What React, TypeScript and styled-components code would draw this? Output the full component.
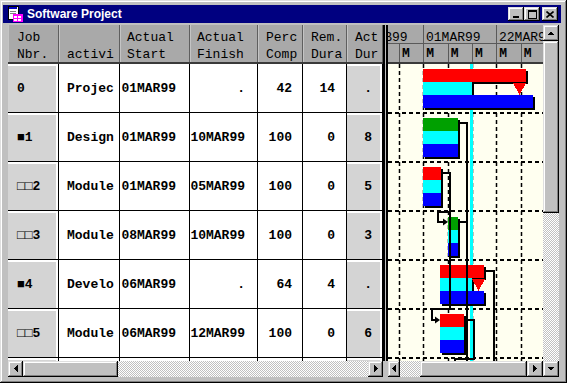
import React from 'react';
import styled, { createGlobalStyle, css } from 'styled-components';

const GlobalStyle = createGlobalStyle`
  html, body { margin: 0; padding: 0; }
  body { background: #c0c0c0; overflow: hidden; }
`;

const raised = css`
  background: #c0c0c0;
  box-shadow: inset -1px -1px #000, inset 1px 1px #dfdfdf, inset -2px -2px #808080, inset 2px 2px #fff;
`;

const Window = styled.div`
  box-sizing: border-box;
  width: 567px;
  height: 383px;
  padding: 5px 6px 0 3px;
  ${raised}
  font-family: "Liberation Mono", "DejaVu Sans Mono", monospace;
  color: #000;
`;

const TitleBar = styled.div`
  display: flex;
  align-items: center;
  height: 18px;
  padding: 0 3px 0 4px;
  background: #000080;
  color: #fff;
  font: bold 12px "Liberation Sans", Arial, sans-serif;
`;

const TitleText = styled.span`
  flex: 1;
  margin-left: 4px;
`;

const CaptionButton = styled.div<{ $gap?: boolean }>`
  ${raised}
  width: 16px;
  height: 14px;
  margin-left: ${p => (p.$gap ? '2px' : '0')};
  display: flex;
  align-items: center;
  justify-content: center;
`;

const Body = styled.div`
  display: grid;
  grid-template-columns: 375px 5px 155px 16px;
  grid-template-rows: 336px 16px;
  margin: 2px 0 0 5px;
`;

const TablePane = styled.div`
  grid-column: 1;
  grid-row: 1;
  display: flex;
  flex-direction: column;
  overflow: hidden;
  background: #fff;
`;

const cols = '51px 61px 70px 68px 45px 44px 36px';

const HeaderRow = styled.div`
  display: grid;
  grid-template-columns: ${cols};
  height: 39px;
  box-sizing: border-box;
  border-bottom: 2px solid #3a3a3a;
  background: #a9a9a9;
`;

const HeadCell = styled.div<{ $pad: number }>`
  box-sizing: border-box;
  padding: 4px 0 0 ${p => p.$pad}px;
  border-right: 1px solid #5f5f5f;
  box-shadow: inset 1px 0 #c4c4c4;
  font-size: 13px;
  line-height: 17px;
  white-space: pre;
  overflow: hidden;
`;

const Rows = styled.div`
  height: 297px;
  overflow: hidden;
`;

const Row = styled.div`
  display: grid;
  grid-template-columns: ${cols};
  height: 49px;
  box-sizing: border-box;
  border-bottom: 1px solid #000;
`;

const Cell = styled.div<{ $right?: boolean; $pad: number; $key?: boolean }>`
  box-sizing: border-box;
  display: flex;
  align-items: center;
  justify-content: ${p => (p.$right ? 'flex-end' : 'flex-start')};
  padding: ${p => (p.$right ? `0 ${p.$pad}px 0 0` : `0 0 0 ${p.$pad}px`)};
  border-right: 1px solid #000;
  background: ${p => (p.$key ? '#d4d4d4' : '#fff')};
  box-shadow: ${p => (p.$key ? 'inset 0 2px #fff, inset -2px 0 #fff' : 'none')};
  font-size: 13px;
  font-weight: bold;
  white-space: pre;
  overflow: hidden;
`;

const Splitter = styled.div`
  grid-column: 2;
  grid-row: 1;
  box-sizing: border-box;
  border-left: 2px solid #000;
  border-right: 2px solid #000;
  background: #c0c0c0;
`;

const GanttPane = styled.div`
  grid-column: 3;
  grid-row: 1;
  display: flex;
  flex-direction: column;
  overflow: hidden;
`;

const GanttHead = styled.div`
  flex: 0 0 39px;
  box-sizing: border-box;
  border-bottom: 2px solid #3a3a3a;
  background: #a9a9a9;
`;

const ScaleRow = styled.div<{ $h: number; $line?: boolean }>`
  display: flex;
  height: ${p => p.$h}px;
  box-sizing: border-box;
  border-bottom: ${p => (p.$line ? '1px solid #5a5a5a' : 'none')};
  overflow: hidden;
`;

const ScaleCell = styled.div<{ $w: number; $top: number; $bold?: boolean }>`
  flex: 0 0 ${p => p.$w}px;
  box-sizing: border-box;
  border-left: 1px solid #5a5a5a;
  padding: ${p => p.$top}px 0 0 2px;
  font-size: 13px;
  line-height: 13px;
  font-weight: ${p => (p.$bold ? 'bold' : 'normal')};
  white-space: nowrap;
  overflow: hidden;
`;

const ScrollBar = styled.div<{ $vertical?: boolean; $col: number }>`
  grid-column: ${p => p.$col};
  grid-row: ${p => (p.$vertical ? '1 / 3' : '2')};
  display: flex;
  flex-direction: ${p => (p.$vertical ? 'column' : 'row')};
  background: #c0c0c0;
  min-width: 0;
  min-height: 0;
`;

const ScrollButton = styled.div<{ $size: number }>`
  ${raised}
  flex: 0 0 ${p => p.$size}px;
  display: flex;
  align-items: center;
  justify-content: center;
`;

const Thumb = styled.div<{ $size: number }>`
  ${raised}
  flex: 0 0 ${p => p.$size}px;
`;

const Track = styled.div<{ $size?: number }>`
  flex: ${p => (p.$size ? `0 0 ${p.$size}px` : '1')};
  background: repeating-conic-gradient(#c0c0c0 0 25%, #fff 0 50%) 0 0 / 2px 2px;
`;

const Corner = styled.div`
  grid-column: 2;
  grid-row: 2;
  background: #c0c0c0;
`;

type Dir = 'up' | 'down' | 'left' | 'right';

const arrowPoints: Record<Dir, string> = {
  up: '0,6 3.5,2.5 7,6',
  down: '0,2 7,2 3.5,5.5',
  left: '5.5,0 5.5,7 2,3.5',
  right: '2,0 2,7 5.5,3.5',
};

const Arrow: React.FC<{ dir: Dir }> = ({ dir }) => (
  <svg width="8" height="8" viewBox="0 0 8 8" shapeRendering="crispEdges">
    <polygon points={arrowPoints[dir]} fill="#000" />
  </svg>
);

const AppIcon = () => (
  <svg width="16" height="16" viewBox="0 0 16 16" shapeRendering="crispEdges">
    <rect x="1" y="0" width="10" height="13" fill="#fff" stroke="#000" strokeWidth="1" />
    <rect x="2" y="1" width="8" height="2" fill="#0000c0" />
    <rect x="3" y="5" width="6" height="1" fill="#808080" />
    <rect x="3" y="7" width="6" height="1" fill="#808080" />
    <rect x="6" y="8" width="10" height="8" fill="#ff00ff" />
    <rect x="7" y="10" width="3" height="2" fill="#fff" />
    <rect x="11" y="10" width="3" height="2" fill="#fff" />
    <rect x="7" y="13" width="3" height="2" fill="#fff" />
    <rect x="11" y="13" width="3" height="2" fill="#fff" />
  </svg>
);

type Task = { job: string; name: string; start: string; finish: string; perc: string; rem: string; dur: string };

const tasks: Task[] = [
  { job: '0', name: 'Projec', start: '01MAR99', finish: '.', perc: '42', rem: '14', dur: '.' },
  { job: '■1', name: 'Design', start: '01MAR99', finish: '10MAR99', perc: '100', rem: '0', dur: '8' },
  { job: '□□2', name: 'Module', start: '01MAR99', finish: '05MAR99', perc: '100', rem: '0', dur: '5' },
  { job: '□□3', name: 'Module', start: '08MAR99', finish: '10MAR99', perc: '100', rem: '0', dur: '3' },
  { job: '■4', name: 'Develo', start: '06MAR99', finish: '.', perc: '64', rem: '4', dur: '.' },
  { job: '□□5', name: 'Module', start: '06MAR99', finish: '12MAR99', perc: '100', rem: '0', dur: '6' },
  { job: '', name: '', start: '', finish: '', perc: '', rem: '', dur: '' },
];

const headers = [
  { text: 'Job\nNbr.', pad: 9 },
  { text: '\nactivi', pad: 8 },
  { text: 'Actual\nStart', pad: 7 },
  { text: 'Actual\nFinish', pad: 7 },
  { text: 'Perc\nComp', pad: 8 },
  { text: 'Rem.\nDura', pad: 8 },
  { text: 'Act\nDur', pad: 8 },
];

const weekW = 73 / 3;
const weekLabels = ['08FEB99', '01MAR99', '22MAR99'];

const RED = '#ff0000';
const CYAN = '#00ffff';
const BLUE = '#0000ff';
const GREEN = '#00a000';

type Seg = { x: number; w: number; fill: string };
type GanttBar = { y: number; segs: Seg[]; flag?: number };

const bars: GanttBar[] = [
  { y: 5, segs: [{ x: 35, w: 103, fill: RED }, { x: 35, w: 49, fill: CYAN }, { x: 35, w: 110, fill: BLUE }], flag: 125 },
  { y: 54, segs: [{ x: 35, w: 35, fill: GREEN }, { x: 35, w: 35, fill: CYAN }, { x: 35, w: 35, fill: BLUE }] },
  { y: 103, segs: [{ x: 35, w: 18, fill: RED }, { x: 35, w: 18, fill: CYAN }, { x: 35, w: 18, fill: BLUE }] },
  { y: 153, segs: [{ x: 60, w: 10, fill: GREEN }, { x: 60, w: 10, fill: CYAN }, { x: 60, w: 10, fill: BLUE }] },
  { y: 201, segs: [{ x: 52, w: 44, fill: RED }, { x: 52, w: 32, fill: CYAN }, { x: 52, w: 44, fill: BLUE }], flag: 84 },
  { y: 250, segs: [{ x: 52, w: 24, fill: RED }, { x: 52, w: 24, fill: CYAN }, { x: 52, w: 24, fill: BLUE }] },
];

// dependency links between tasks
const links = [
  'M72 59 H79 V297',
  'M55 109 H62 V245 H44 V256 H49',
  'M62 148 H50 V158 H57',
  'M72 158 H79',
  'M98 207 H106 V297',
  'M78 256 H86 V295 H67 V297',
];

const GanttChart = () => {
  const W = 155;
  const H = 297;
  const weekXs = [11, 35, 60, 84, 108, 133];
  const rowYs = [49, 98, 147, 196, 245, 294];
  return (
    <svg width={W} height={H} viewBox={`0 0 ${W} ${H}`} style={{ display: 'block' }}>
      <rect width={W} height={H} fill="#fffff0" />
      {weekXs.map(x => (
        <line key={x} x1={x + 0.5} x2={x + 0.5} y1={0} y2={H} stroke="#000" strokeWidth={1.5} strokeDasharray="4 3" />
      ))}
      {rowYs.map(y => (
        <line key={y} x1={0} x2={W} y1={y} y2={y} stroke="#000" strokeWidth={2} strokeDasharray="4 3" />
      ))}
      <rect x={82} y={0} width={3} height={H} fill={CYAN} />
      {bars.map((b, i) => (
        <g key={i} shapeRendering="crispEdges">
          {b.segs.map((s, j) => (
            <g key={j}>
              <rect x={s.x + 2} y={b.y + j * 13 + 2} width={s.w} height={13} fill="#000" />
              <rect x={s.x} y={b.y + j * 13} width={s.w} height={13} fill={s.fill} />
            </g>
          ))}
          {b.flag !== undefined && (
            <polygon points={`${b.flag},${b.y + 14} ${b.flag + 13},${b.y + 14} ${b.flag + 6.5},${b.y + 26}`} fill={RED} />
          )}
        </g>
      ))}
      {links.map(d => (
        <path key={d} d={d} fill="none" stroke="#000" strokeWidth={2} />
      ))}
      <polygon points="52,256 47,252.5 47,259.5" fill="#000" />
      <polygon points="60,158 55,154.5 55,161.5" fill="#000" />
    </svg>
  );
};

const App: React.FC = () => {
  return (
    <>
      <GlobalStyle />
      <Window>
        <TitleBar>
          <AppIcon />
          <TitleText>Software Project</TitleText>
          <CaptionButton>
            <svg width="8" height="8" viewBox="0 0 8 8" shapeRendering="crispEdges">
              <rect x="1" y="6" width="6" height="2" fill="#000" />
            </svg>
          </CaptionButton>
          <CaptionButton>
            <svg width="9" height="9" viewBox="0 0 9 9" shapeRendering="crispEdges">
              <rect x="0.5" y="0.5" width="8" height="8" fill="none" stroke="#000" />
              <rect x="0" y="1" width="9" height="1" fill="#000" />
            </svg>
          </CaptionButton>
          <CaptionButton $gap>
            <svg width="8" height="7" viewBox="0 0 8 7">
              <path d="M0.5 0.5 L7.5 6.5 M7.5 0.5 L0.5 6.5" stroke="#000" strokeWidth="1.6" />
            </svg>
          </CaptionButton>
        </TitleBar>

        <Body>
          <TablePane>
            <HeaderRow>
              {headers.map(h => (
                <HeadCell key={h.text} $pad={h.pad}>{h.text}</HeadCell>
              ))}
            </HeaderRow>
            <Rows>
              {tasks.map((t, i) => (
                <Row key={i}>
                  <Cell $pad={9} $key>{t.job}</Cell>
                  <Cell $pad={8}>{t.name}</Cell>
                  <Cell $right $pad={13}>{t.start}</Cell>
                  <Cell $right $pad={12}>{t.finish}</Cell>
                  <Cell $right $pad={10}>{t.perc}</Cell>
                  <Cell $right $pad={11}>{t.rem}</Cell>
                  <Cell $right $pad={10} $key>{t.dur}</Cell>
                </Row>
              ))}
            </Rows>
          </TablePane>

          <Splitter />

          <GanttPane>
            <GanttHead>
              <ScaleRow $h={19} $line>
                {weekLabels.map((l, i) => (
                  <ScaleCell key={l} $w={73} $top={6} style={i === 0 ? { marginLeft: -38 } : undefined}>
                    {l}
                  </ScaleCell>
                ))}
              </ScaleRow>
              <ScaleRow $h={18}>
                {Array.from({ length: 7 }).map((_, i) => (
                  <ScaleCell key={i} $w={weekW} $top={3} $bold style={i === 0 ? { marginLeft: 11 - weekW } : undefined}>
                    M
                  </ScaleCell>
                ))}
              </ScaleRow>
            </GanttHead>
            <GanttChart />
          </GanttPane>

          <ScrollBar $vertical $col={4}>
            <ScrollButton $size={16}><Arrow dir="up" /></ScrollButton>
            <Thumb $size={172} />
            <Track />
            <ScrollButton $size={16}><Arrow dir="down" /></ScrollButton>
          </ScrollBar>

          <ScrollBar $col={1}>
            <ScrollButton $size={15}><Arrow dir="left" /></ScrollButton>
            <Thumb $size={95} />
            <Track />
            <ScrollButton $size={15}><Arrow dir="right" /></ScrollButton>
          </ScrollBar>
          <Corner />
          <ScrollBar $col={3}>
            <ScrollButton $size={12}><Arrow dir="left" /></ScrollButton>
            <Track $size={20} />
            <Thumb $size={107} />
            <ScrollButton $size={16}><Arrow dir="right" /></ScrollButton>
          </ScrollBar>
        </Body>
      </Window>
    </>
  );
};

export default App;
